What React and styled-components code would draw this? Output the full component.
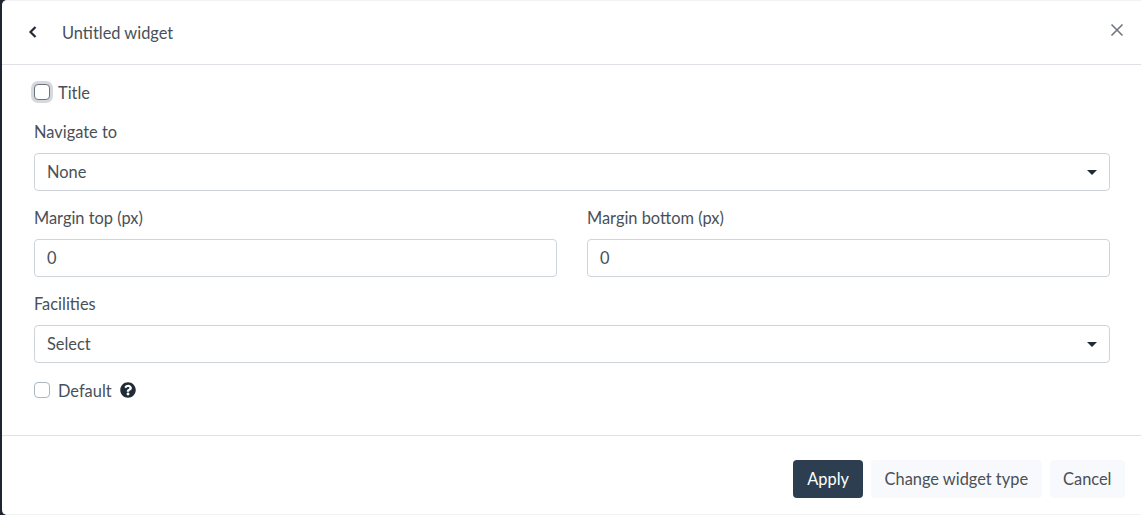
import React from 'react'
import styled, { createGlobalStyle } from 'styled-components'
import { FaQuestionCircle } from 'react-icons/fa'

const GlobalStyle = createGlobalStyle`
  html, body {
    margin: 0;
    padding: 0;
    height: 515px;
    overflow: hidden;
    background: #1f2530;
  }
  * {
    box-sizing: border-box;
  }
`

const Backdrop = styled.div`
  width: 1141px;
  height: 515px;
  padding-left: 2px;
  font-family: Lato, 'Noto Sans', sans-serif;
  font-size: 16.4px;
  color: #495057;
`

const Modal = styled.div`
  height: 100%;
  background: #fff;
  border-top: 1px solid #f1f2f4;
  border-bottom: 1px solid #f1f2f4;
  border-radius: 5px 0 0 5px;
  display: flex;
  flex-direction: column;
`

const Header = styled.header`
  height: 64px;
  flex: none;
  display: flex;
  align-items: center;
  padding: 0 17px 0 24px;
  border-bottom: 1px solid #dee2e6;
`

const BackButton = styled.span`
  width: 36px;
  margin-bottom: 2px;
  display: flex;
  color: #212b36;
`

const HeaderTitle = styled.h5`
  flex: 1;
  margin: 0 0 1px;
  font-size: inherit;
  font-weight: 400;
  color: #495057;
`

const CloseButton = styled.span`
  margin-bottom: 5px;
  display: flex;
  color: #6f767d;
`

const Body = styled.div`
  height: 370px;
  flex: none;
  padding: 17px 31px 0 32px;
  display: flex;
  flex-direction: column;
`

const CheckRow = styled.label`
  display: flex;
  align-items: center;
  gap: 8px;
  height: 20px;
  margin-top: ${p => p.$top || 0}px;
`

const CheckBox = styled.span`
  width: 16px;
  height: 16px;
  flex: none;
  background: #fff;
  border-radius: 4px;
  border: 1px solid ${p => (p.$focus ? '#6c757d' : '#adb5bd')};
  box-shadow: ${p => (p.$focus ? '0 0 0 3px #d5d9de' : 'none')};
`

const Help = styled.span`
  display: flex;
  color: #212b36;
`

const Field = styled.div`
  margin-top: ${p => p.$top || 0}px;
  min-width: 0;
`

const Label = styled.div`
  height: 20px;
  line-height: 20px;
  margin-bottom: 11px;
`

const Control = styled.div`
  height: 38px;
  border: 1px solid #ced4da;
  border-radius: 4px;
  padding: 0 12px 2px;
  display: flex;
  align-items: center;
  justify-content: space-between;
  background: #fff;
`

const Caret = styled.span`
  width: 0;
  height: 0;
  margin-top: 2px;
  border-left: 5px solid transparent;
  border-right: 5px solid transparent;
  border-top: 5px solid #212b36;
`

const TwoColumns = styled.div`
  display: grid;
  grid-template-columns: 1fr 1fr;
  column-gap: 30px;
  margin-top: 17px;
`

const Footer = styled.footer`
  flex: 1;
  border-top: 1px solid #dee2e6;
  display: flex;
  align-items: center;
  justify-content: flex-end;
  gap: 8px;
  padding: 8px 16px 0 0;
`

const Button = styled.button`
  height: 38px;
  padding: 0 ${p => (p.$primary ? 14 : 13.5)}px 2px;
  border: none;
  border-radius: 4px;
  font: inherit;
  color: ${p => (p.$primary ? '#fff' : '#495057')};
  background: ${p => (p.$primary ? '#2c3e50' : '#f8f9fc')};
`

export default function App() {
  return (
    <Backdrop>
      <GlobalStyle />
      <Modal>
        <Header>
          <BackButton>
            <svg width="14" height="14" viewBox="0 0 14 14" fill="none">
              <path d="M9.5 2 4.5 7l5 5" stroke="currentColor" strokeWidth="2.2" />
            </svg>
          </BackButton>
          <HeaderTitle>Untitled widget</HeaderTitle>
          <CloseButton>
            <svg width="14" height="14" viewBox="0 0 14 14" fill="none">
              <path d="M1.5 1.5l11 11M12.5 1.5l-11 11" stroke="currentColor" strokeWidth="1.6" />
            </svg>
          </CloseButton>
        </Header>
        <Body>
          <CheckRow>
            <CheckBox $focus />
            Title
          </CheckRow>
          <Field $top={20}>
            <Label>Navigate to</Label>
            <Control>
              None
              <Caret />
            </Control>
          </Field>
          <TwoColumns>
            <Field>
              <Label>Margin top (px)</Label>
              <Control>0</Control>
            </Field>
            <Field>
              <Label>Margin bottom (px)</Label>
              <Control>0</Control>
            </Field>
          </TwoColumns>
          <Field $top={17}>
            <Label>Facilities</Label>
            <Control>
              Select
              <Caret />
            </Control>
          </Field>
          <CheckRow $top={17}>
            <CheckBox />
            Default
            <Help>
              <FaQuestionCircle size={16} />
            </Help>
          </CheckRow>
        </Body>
        <Footer>
          <Button $primary>Apply</Button>
          <Button>Change widget type</Button>
          <Button>Cancel</Button>
        </Footer>
      </Modal>
    </Backdrop>
  )
}
